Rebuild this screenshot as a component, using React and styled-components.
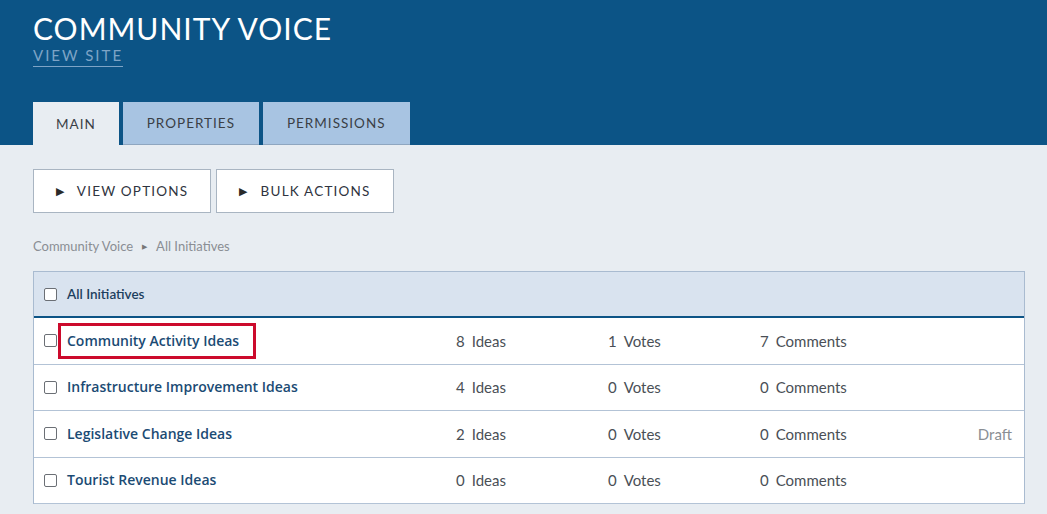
import React from 'react';
import styled, { createGlobalStyle } from 'styled-components';

const GlobalStyle = createGlobalStyle`
  html, body {
    margin: 0;
    padding: 0;
    background: #e8edf2;
    font-family: Lato, "Open Sans", sans-serif;
  }
`;

const rows = [
  { name: 'Community Activity Ideas', ideas: 8, votes: 1, comments: 7, highlight: true },
  { name: 'Infrastructure Improvement Ideas', ideas: 4, votes: 0, comments: 0 },
  { name: 'Legislative Change Ideas', ideas: 2, votes: 0, comments: 0, status: 'Draft' },
  { name: 'Tourist Revenue Ideas', ideas: 0, votes: 0, comments: 0 },
];

const App = () => (
  <Page>
    <GlobalStyle />
    <Header>
      <Title>COMMUNITY VOICE</Title>
      <ViewSite href="#">VIEW SITE</ViewSite>
      <Tabs>
        <Tab active>MAIN</Tab>
        <Tab>PROPERTIES</Tab>
        <Tab>PERMISSIONS</Tab>
      </Tabs>
    </Header>
    <Body>
      <Toolbar>
        <ToolButton><Arrow>▶</Arrow>VIEW OPTIONS</ToolButton>
        <ToolButton><Arrow>▶</Arrow>BULK ACTIONS</ToolButton>
      </Toolbar>
      <Crumbs>
        Community Voice <CrumbSep>▶</CrumbSep> All Initiatives
      </Crumbs>
      <Table>
        <HeadRow>
          <Check type="checkbox" />
          <HeadLabel>All Initiatives</HeadLabel>
        </HeadRow>
        {rows.map((r) => (
          <Row key={r.name}>
            <Check type="checkbox" />
            <NameCell>
              <Name href="#" highlight={r.highlight}>{r.name}</Name>
            </NameCell>
            <Stat>{r.ideas}<span>Ideas</span></Stat>
            <Stat>{r.votes}<span>Votes</span></Stat>
            <Stat>{r.comments}<span>Comments</span></Stat>
            <Status>{r.status}</Status>
          </Row>
        ))}
      </Table>
    </Body>
  </Page>
);

const Page = styled.div`
  min-height: 514px;
`;

const Header = styled.header`
  background: #0c5486;
  padding: 10px 33px 0;
  display: flex;
  flex-direction: column;
  align-items: flex-start;
`;

const Title = styled.h1`
  margin: 0;
  color: #fff;
  font-weight: 400;
  font-size: 30px;
  letter-spacing: 1px;
  line-height: 36px;
`;

const ViewSite = styled.a`
  color: #7ea4c6;
  font-size: 15px;
  letter-spacing: 2px;
  text-decoration: none;
  border-bottom: 1px solid #7ea4c6;
  line-height: 17px;
  padding-bottom: 2px;
  margin-top: 1px;
`;

const Tabs = styled.nav`
  display: flex;
  gap: 4px;
  margin-top: 35px;
`;

const Tab = styled.div`
  height: 43px;
  display: flex;
  align-items: center;
  justify-content: center;
  padding: 0 ${(p) => (p.active ? 23 : 24)}px;
  background: ${(p) => (p.active ? '#e8edf2' : '#a8c4e2')};
  border-bottom: ${(p) => (p.active ? 'none' : '1px solid #8ea6c0')};
  box-sizing: border-box;
  color: #3a3f46;
  font-size: 13.5px;
  letter-spacing: 1px;
`;

const Body = styled.main`
  padding: 24px 22px 0 33px;
`;

const Toolbar = styled.div`
  display: flex;
  gap: 5px;
`;

const ToolButton = styled.button`
  width: 178px;
  height: 44px;
  background: #fff;
  border: 1px solid #a9b5c2;
  display: flex;
  align-items: center;
  justify-content: center;
  gap: 12px;
  font-family: inherit;
  font-size: 13.5px;
  letter-spacing: 1.2px;
  color: #2f3440;
  cursor: pointer;
`;

const Arrow = styled.span`
  font-size: 11px;
  color: #2a2a2a;
`;

const Crumbs = styled.div`
  margin: 25px 0 17px;
  font-size: 13px;
  color: #8a8e94;
  display: flex;
  align-items: center;
  gap: 9px;
`;

const CrumbSep = styled.span`
  font-size: 7px;
  color: #777;
`;

const Table = styled.section`
  background: #fff;
  border: 1px solid #a9bbd0;
  border-bottom: none;
`;

const HeadRow = styled.div`
  display: flex;
  align-items: center;
  height: 44px;
  padding-left: 10px;
  background: #d9e3ef;
  border-bottom: 2px solid #0c5486;
`;

const HeadLabel = styled.span`
  font-size: 13.5px;
  font-weight: 600;
  color: #1d3f5e;
`;

const Row = styled.div`
  display: grid;
  grid-template-columns: 24px 388px 152px 152px 1fr auto;
  align-items: center;
  height: 46.5px;
  box-sizing: border-box;
  padding: 0 12px 0 10px;
  border-bottom: 1px solid #b3c3d6;
`;

const Check = styled.input`
  appearance: none;
  width: 13px;
  height: 13px;
  margin: 0 10px 0 0;
  border: 1px solid #6b6f75;
  border-radius: 2px;
  background: #fff;
  box-sizing: border-box;
`;

const NameCell = styled.div`
  display: flex;
`;

const Name = styled.a`
  font-family: "Open Sans", sans-serif;
  font-size: 14px;
  font-weight: 600;
  line-height: 20px;
  color: #1b4b74;
  text-decoration: none;
  padding: 5px 14px 5px 6px;
  margin-left: -10px;
  border: 3px solid ${(p) => (p.highlight ? '#cc0a2c' : 'transparent')};
`;

const Stat = styled.div`
  font-size: 15px;
  color: #4a4f56;
  display: flex;
  gap: 7px;
`;

const Status = styled.div`
  font-size: 15px;
  color: #8a8e94;
`;

export default App;
